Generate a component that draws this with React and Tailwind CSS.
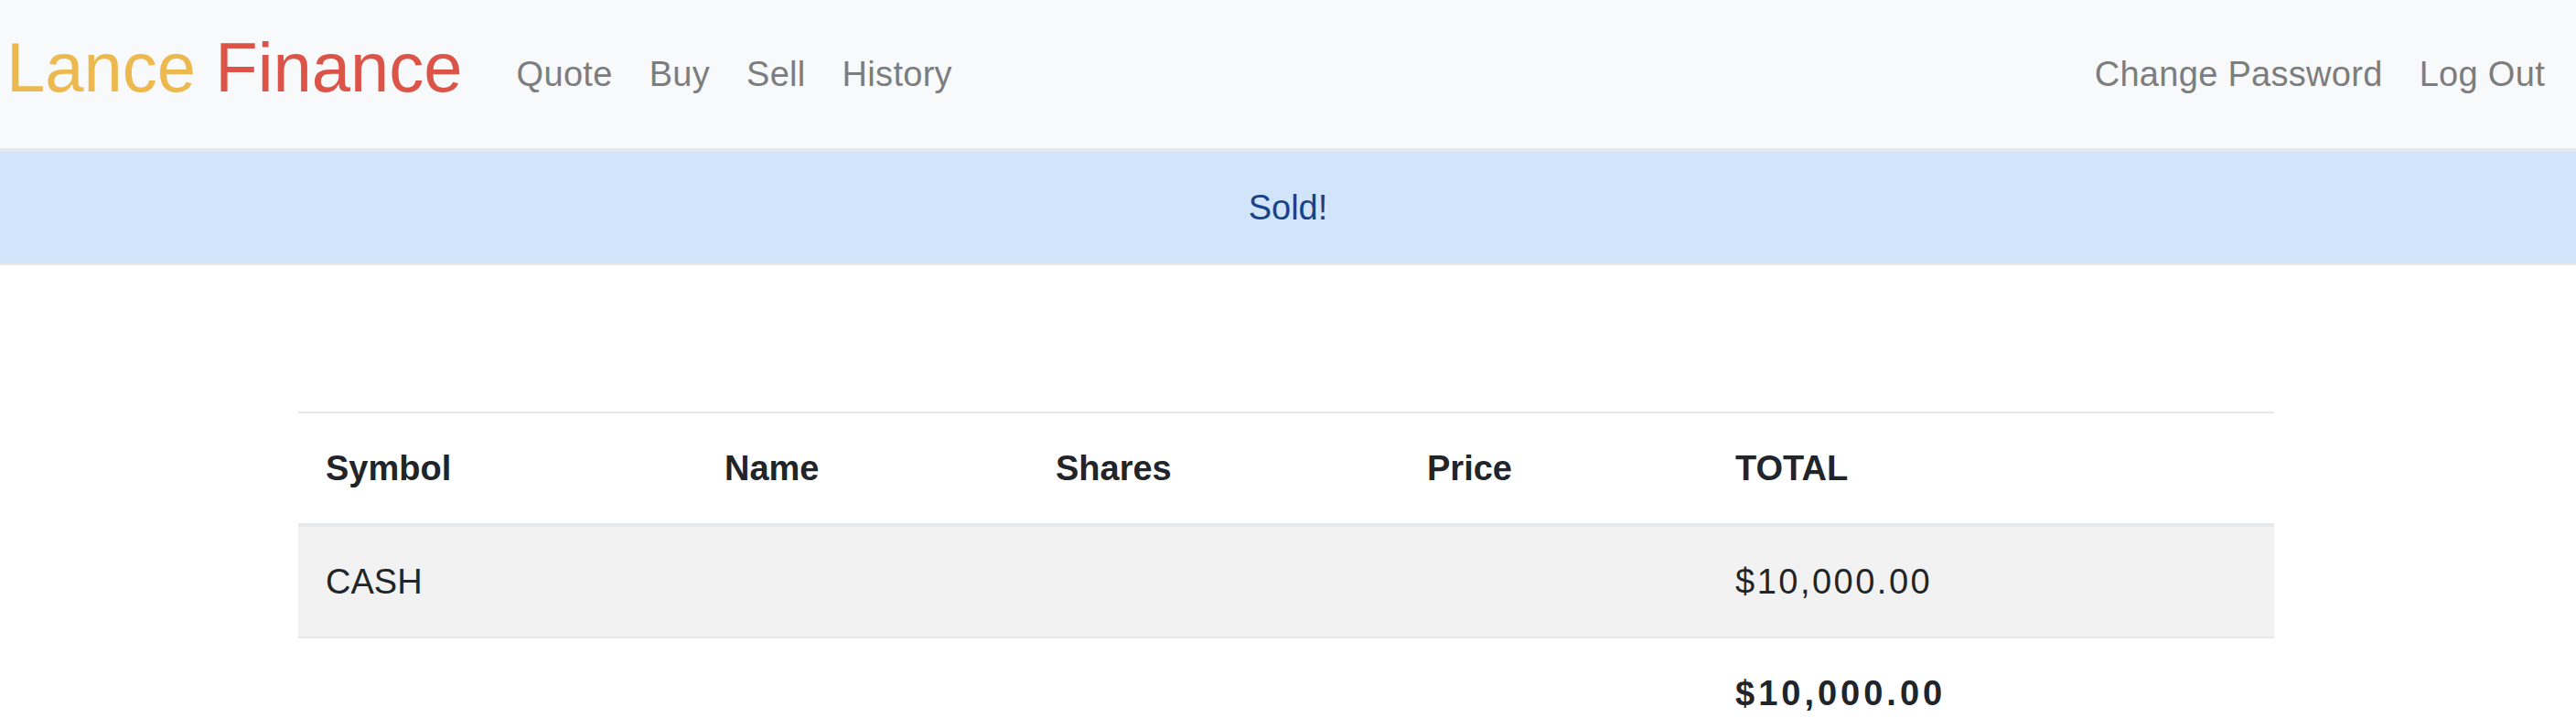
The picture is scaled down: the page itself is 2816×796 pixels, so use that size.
const links = ['Quote', 'Buy', 'Sell', 'History']

function Navbar() {
  return (
    <nav className="h-[166px] bg-[#f8f9fa] border-b-4 border-[#e6e9ec] flex items-center pl-[7px] pr-[14px]">
      <a className="text-[76px] leading-none mb-[14px] mr-[39px] whitespace-nowrap">
        <span className="text-[#edb94e]">Lance</span>{' '}
        <span className="text-[#dc5347]">Finance</span>
      </a>
      <ul className="flex items-center text-[38px] leading-none text-[#7c7d7e] tracking-[0.3px]">
        {links.map((l) => (
          <li key={l}>
            <a className="px-5">{l}</a>
          </li>
        ))}
      </ul>
      <ul className="ml-auto flex items-center text-[38px] leading-none text-[#7c7d7e] tracking-[0.3px]">
        <li>
          <a className="px-5">Change Password</a>
        </li>
        <li>
          <a className="px-5">Log Out</a>
        </li>
      </ul>
    </nav>
  )
}

export default function App() {
  return (
    <div className="min-h-screen bg-white font-['Liberation_Sans',Arial,sans-serif] text-[#212529]">
      <Navbar />

      {/* flash message */}
      <div className="h-[124px] bg-[#d1e4fa] border-b-2 border-[#e6e9ec] flex items-center justify-center text-[38px] leading-none text-[#174488]">
        Sold!
      </div>

      <main className="pt-[160px] pr-[4px] flex justify-center">
        <table className="table-fixed border-separate border-spacing-0 w-[2160px] text-[38px] leading-none">
          <colgroup>
            <col className="w-[436px]" />
            <col className="w-[362px]" />
            <col className="w-[406px]" />
            <col className="w-[337px]" />
            <col className="w-[619px]" />
          </colgroup>
          <thead>
            <tr className="font-bold text-left">
              {['Symbol', 'Name', 'Shares', 'Price', 'TOTAL'].map((h) => (
                <th key={h} className="h-[126px] px-[30px] align-middle border-t-2 border-b-4 border-[#e6e9ec]">
                  {h}
                </th>
              ))}
            </tr>
          </thead>
          <tbody>
            <tr className="bg-[#f2f2f2]">
              <td className="h-[122px] px-[30px] border-b-2 border-[#e6e9ec]">CASH</td>
              <td className="border-b-2 border-[#e6e9ec]"></td>
              <td className="border-b-2 border-[#e6e9ec]"></td>
              <td className="border-b-2 border-[#e6e9ec]"></td>
              <td className="px-[30px] border-b-2 border-[#e6e9ec] tracking-[2.5px]">$10,000.00</td>
            </tr>
            <tr>
              <td className="h-[120px]"></td>
              <td></td>
              <td></td>
              <td></td>
              <td className="px-[30px] font-bold tracking-[4px]">$10,000.00</td>
            </tr>
          </tbody>
        </table>
      </main>
    </div>
  )
}
